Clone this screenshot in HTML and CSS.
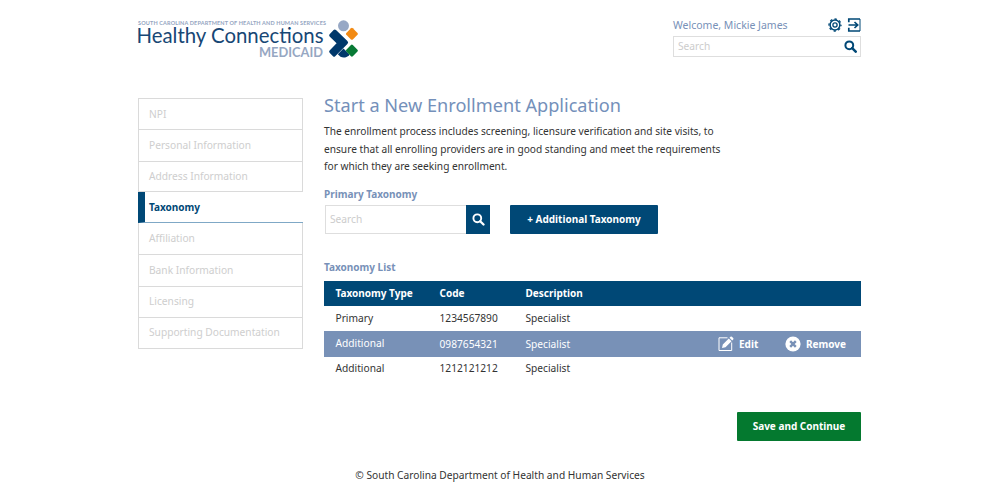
FILE: index.html
```html
<!DOCTYPE html>
<html lang="en">
<head>
<meta charset="utf-8">
<title>Healthy Connections Medicaid</title>
<link rel="stylesheet" href="styles.css">
</head>
<body>
<div class="page">
  <header class="header">
    <svg class="logo" width="222" height="42" viewBox="0 0 222 42">
      <text class="logo-dept" x="0" y="5.500" textLength="188">SOUTH CAROLINA DEPARTMENT OF HEALTH AND HUMAN SERVICES</text>
      <text class="logo-name" x="-1.500" y="23.500" textLength="187" lengthAdjust="spacingAndGlyphs">Healthy Connections</text>
      <text class="logo-sub" x="121" y="37.500" textLength="64" lengthAdjust="spacingAndGlyphs">MEDICAID</text>
      <circle cx="205.500" cy="6.800" r="5.500" fill="#97a8c5"/>
      <path d="M191.600 15.200 195.600 11Q196.800 10 198 11.100L209.400 22Q210.900 23.500 209.400 25L197.200 37.200Q196.100 38.200 195 37.200L191.600 33.800Q190.600 32.700 191.600 31.600L198.600 24.300 191.600 17.400Q190.600 16.300 191.600 15.200Z" fill="#00386b"/>
      <path d="M199.800 35.300 205.500 29.500 211 35Q211.700 36 210.800 36.700L208.500 38Q205.500 39.300 202.500 37.800Z" fill="#00386b"/>
      <rect x="209.300" y="10.200" width="9.200" height="9.200" rx="1.300" transform="rotate(45 213.900 14.800)" fill="#f28a13"/>
      <rect x="209.300" y="27" width="9.200" height="9.200" rx="1.300" transform="rotate(45 213.900 31.600)" fill="#087a35"/>
    </svg>
    <div class="account">
      <div class="account-row">
        <span class="welcome">Welcome, Mickie James</span>
        <svg class="gear" width="14" height="14" viewBox="0 0 14 14" fill="none" stroke="#004876">
          <circle cx="7" cy="7" r="4.900" stroke-width="1.500"/>
          <circle cx="7" cy="7" r="6" stroke-width="1.300" stroke-dasharray="2.350 2.362" stroke-dashoffset="1.175"/>
          <circle cx="7" cy="7" r="2.100" stroke-width="1.300"/>
        </svg>
        <svg width="14" height="14" viewBox="0 0 14 14" fill="none" stroke="#004876" stroke-width="1.700">
          <path d="M1.800 4.200V1H13M1.800 9.800V13H13M1.500 7h9M7.500 4 10.700 7 7.500 10"/><path d="M13 1v12" stroke-width="1"/>
        </svg>
      </div>
      <div class="site-search">
        <span>Search</span>
        <svg width="13" height="13" viewBox="0 0 13 13" fill="none" stroke="#004876"><circle cx="5.300" cy="5.300" r="3.900" stroke-width="2"/><path d="m8.200 8.200 3.500 3.500" stroke-width="2.500" stroke-linecap="round"/></svg>
      </div>
    </div>
  </header>
  <div class="body">
    <nav class="steps">
      <a class="step">NPI</a>
      <a class="step">Personal Information</a>
      <a class="step">Address Information</a>
      <a class="step active">Taxonomy</a>
      <a class="step">Affiliation</a>
      <a class="step">Bank Information</a>
      <a class="step">Licensing</a>
      <a class="step">Supporting Documentation</a>
    </nav>
    <main class="main">
      <h1 class="title">Start a New Enrollment Application</h1>
      <p class="intro">The enrollment process includes screening, licensure verification and site visits, to<br>ensure that all enrolling providers are in good standing and meet the requirements<br>for which they are seeking enrollment.</p>
      <h2 class="label">Primary Taxonomy</h2>
      <div class="controls">
        <div class="tax-search">
          <span class="tax-input">Search</span>
          <span class="tax-go"><svg width="13" height="13" viewBox="0 0 13 13" fill="none" stroke="#fff"><circle cx="5.300" cy="5.300" r="3.900" stroke-width="1.900"/><path d="m8.200 8.200 3.300 3.300" stroke-width="2.300" stroke-linecap="round"/></svg></span>
        </div>
        <button class="btn add">+ Additional Taxonomy</button>
      </div>
      <h2 class="label list-label">Taxonomy List</h2>
      <div class="table">
        <div class="row head"><span>Taxonomy Type</span><span>Code</span><span>Description</span></div>
        <div class="row"><span>Primary</span><span>1234567890</span><span>Specialist</span></div>
        <div class="row selected">
          <span class="type">Additional</span><span>0987654321</span><span>Specialist</span>
          <div class="actions">
            <svg width="17" height="16" viewBox="0 0 17 16"><path d="M9.500 1.800H1v12.700h12.700V6.500" fill="none" stroke="#fff" stroke-width="1"/><path d="m4 12 .8-3.500 6-6 2.700 2.700-6 6zM11.500 1.800l1-1q.7-.6 1.400 0l1.300 1.300q.6.7 0 1.300l-1 1z" fill="#fff"/></svg>
            <span class="edit">Edit</span>
            <svg width="16" height="16" viewBox="0 0 16 16"><circle cx="8" cy="8" r="7.600" fill="#fff"/><path d="m5.200 5.200 5.600 5.600m0-5.600-5.600 5.600" stroke="#7891b7" stroke-width="2.400"/></svg>
            <span class="remove">Remove</span>
          </div>
        </div>
        <div class="row last"><span>Additional</span><span>1212121212</span><span>Specialist</span></div>
      </div>
      <button class="btn save">Save and Continue</button>
    </main>
  </div>
  <footer class="footer"><span>© South Carolina Department of Health and Human Services</span></footer>
</div>
</body>
</html>
```
FILE: styles.css
```css
* { box-sizing: border-box; }
body { margin: 0; background: #fff; color: #333; font: 10.2px/16px "Noto Sans", sans-serif; }
svg { display: block; flex: none; }
.page { width: 724px; height: 495px; margin-left: 138px; display: flex; flex-direction: column; }
.header { display: flex; justify-content: space-between; height: 97px; padding-top: 18px; }
.logo { overflow: visible; margin-top: 1px; }
.logo-dept { font: 700 5.500px "Lato", sans-serif; fill: #94a5c1; }
.logo-name { font: 400 21.500px "Lato", sans-serif; fill: #174775; }
.logo-sub { font: 700 13px "Lato", sans-serif; fill: #96a7c2; }
.account { width: 188px; margin-right: 1px; }
.account-row { display: flex; align-items: center; height: 14px; }
.welcome { flex: 1; color: #7891b8; font-size: 10.500px; }
.gear { margin-right: 5px; }
.site-search { display: flex; justify-content: space-between; align-items: center; height: 21px; margin-top: 4px; padding: 0 3px 0 4px; border: 1px solid #dedede; color: #ccc; line-height: 18px; }
.site-search span { margin-top: -2px; }
.body { display: flex; height: 368px; }
.steps { display: grid; grid-template-rows: repeat(8, 31.250px); width: 165px; height: 251px; margin: 1px 21px 0 0; border-bottom: 1px solid #dadada; }
.step { display: flex; align-items: center; padding: 0 0 1px 10px; border: 1px solid #dadada; border-bottom: 0; color: #cecece; }
.step.active { padding: 1px 0 0 4px; border: 0; border-left: 7px solid #004876; border-bottom: 1px solid #7fa8c6; color: #004876; font-weight: 700; font-size: 10px; box-shadow: 0 -1px #dadada; }
.step.active + .step { border-top: 0; }
.main { display: flex; flex-direction: column; width: 537px; }
.title { height: 25px; margin: -4px 0 0; color: #7490ba; font-size: 18.150px; font-weight: 400; line-height: 25px; }
.intro { margin: 5px 0 0; font-size: 10.170px; line-height: 17.500px; }
.label { height: 16px; margin: 10px 0 0; color: #7891b8; font-size: 10px; line-height: 16px; }
.controls { display: flex; gap: 20px; height: 29px; margin: 3px 0 0 1px; }
.tax-search { display: flex; width: 165px; }
.tax-input { flex: 1; padding-left: 4px; border: 1px solid #dedede; border-right: 0; color: #ccc; line-height: 27px; }
.tax-go { display: flex; align-items: center; justify-content: center; width: 24px; padding-left: 1px; background: #004876; }
.btn { padding: 0; border: 0; border-radius: 1px; color: #fff; font: 700 10px/29px "Noto Sans", sans-serif; }
.add { width: 148px; background: #004876; }
.list-label { margin-top: 25px; }
.table { margin-top: 6px; }
.row { display: grid; grid-template-columns: 104px 86px 1fr auto; align-items: center; height: 25px; padding-left: 11.500px; }
.row.head { background: #004876; color: #fff; font-size: 10px; font-weight: 700; }
.row.selected { height: 26px; background: #7891b7; color: #fff; }
.row .type { margin-top: -2px; }
.row.last { height: 23px; margin-bottom: 1px; }
.actions { display: flex; align-items: center; padding-right: 15px; font-size: 10px; font-weight: 700; }
.edit { width: 46px; margin-left: 4px; }
.remove { margin-left: 5px; }
.save { align-self: flex-end; width: 124px; height: 29px; margin-top: 31px; background: #04792f; }
.footer { display: flex; justify-content: center; padding-top: 2px; }
```
